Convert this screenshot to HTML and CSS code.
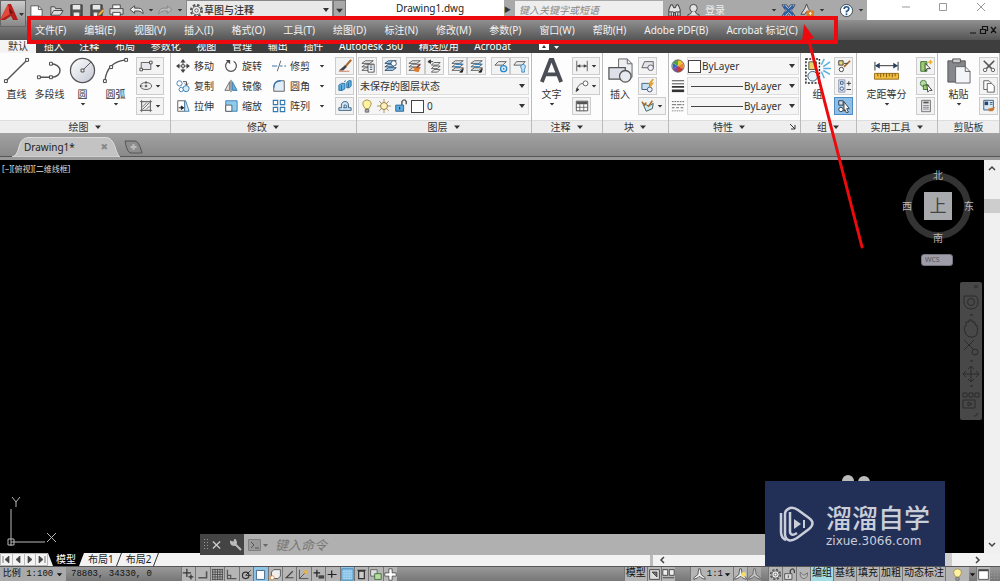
FILE: index.html
```html
<!DOCTYPE html>
<html lang="zh-CN">
<head>
<meta charset="utf-8">
<title>Drawing1.dwg</title>
<link rel="stylesheet" href="styles.css">
</head>
<body>
<svg class="sprite" aria-hidden="true">
  <defs>
    <linearGradient id="disc" x1="0" y1="0" x2="1" y2="1"><stop offset="0" stop-color="#fff"/><stop offset="1" stop-color="#c3c8d4"/></linearGradient>
  </defs>
  <symbol id="dn" viewBox="0 0 8 8"><path d="M1 2.500h6L4 6z" fill="currentColor"/></symbol>
  <symbol id="new" viewBox="0 0 16 16"><path d="M2 3h8l4 4v7H2z" fill="#fff" stroke="#555"/><path d="M10 3v4h4" fill="none" stroke="#555"/></symbol>
  <symbol id="open" viewBox="0 0 16 16"><path d="M2 13V4h4l1 2h6v2M2 13l3-5h10l-3 5z" fill="#ddd" stroke="#444"/></symbol>
  <symbol id="save" viewBox="0 0 16 16"><path d="M2 2h12v12H2z" fill="#555" stroke="#333"/><path d="M4 2h8v5H4zM5 10h6v4H5z" fill="#e8e8e8"/></symbol>
  <symbol id="saveas" viewBox="0 0 16 16"><path d="M2 2h12v12H2z" fill="#555" stroke="#333"/><path d="M4 2h8v5H4zM5 10h4v4H5z" fill="#e8e8e8"/><path d="m9 14 1-3 5-5 2 2-5 5z" fill="#f0b040" stroke="#754"/></symbol>
  <symbol id="print" viewBox="0 0 16 16"><path d="M4 6V2h8v4" fill="#fff" stroke="#444"/><path d="M1 6h14v6H1z" fill="#ddd" stroke="#444"/><path d="M4 10h8v4H4z" fill="#fff" stroke="#444"/></symbol>
  <symbol id="undo" viewBox="0 0 16 16"><path d="m1 7 5-4v2.500h4q5 0 5 6-2-3-5-3H6V11z" fill="#eee" stroke="#444"/></symbol>
  <symbol id="redo" viewBox="0 0 16 16"><path d="m15 7-5-4v2.500H6q-5 0-5 6 2-3 5-3h4V11z" fill="#bbb" stroke="#888"/></symbol>
  <symbol id="gear" viewBox="0 0 16 16"><circle cx="8" cy="8" r="6" fill="none" stroke="#555" stroke-width="2" stroke-dasharray="2.700 2"/><circle cx="8" cy="8" r="4.500" fill="#eee" stroke="#555"/><circle cx="8" cy="8" r="1.800" fill="#fff" stroke="#555"/></symbol>
  <symbol id="binoc" viewBox="0 0 16 16"><path d="M2 7l2-5h2l1 3h2l1-3h2l2 5v7h-5v-4H7v4H2z" fill="#e4e4e4" stroke="#333"/><path d="M2 9.500h5M9 9.500h5M4.500 10v4M11.500 10v4" stroke="#333"/></symbol>
  <symbol id="user" viewBox="0 0 16 16"><circle cx="8" cy="5.500" r="4" fill="#e4e4e4" stroke="#444"/><path d="M6 9q0 3-4 3.500V14h12v-1.500Q10 12 10 9" fill="#e4e4e4" stroke="#444"/></symbol>
  <symbol id="exch" viewBox="0 0 16 16"><path d="M1 2h5l2 3 2-3h5l-4 6 4 6h-5l-2-3-2 3H1l4-6z" fill="#dde" stroke="#346"/><path d="m3 3 10 10M13 3 3 13" stroke="#2c5fa0" stroke-width="2.500"/></symbol>
  <symbol id="tri" viewBox="0 0 16 16"><path d="M7 1 5 6l-4 6h4l2-3 2 3h4L9 6z" fill="#ddd" stroke="#444"/><path d="M7 8h8v7H7z" fill="#e07a1c"/><path d="M9.500 11h3M11 9.500V13" stroke="#fff"/></symbol>
  <symbol id="help" viewBox="0 0 16 16"><circle cx="8" cy="8" r="6.500" fill="#fff" stroke="#345"/><path d="M5.500 6.500Q5.500 4 8 4t2.500 2.200Q10.500 8 8 9v1" fill="none" stroke="#258" stroke-width="1.800"/><circle cx="8" cy="12" r="1" fill="#258"/></symbol>
  <symbol id="line" viewBox="0 0 28 28"><path d="M3 25 25 3" stroke="#555" stroke-width="1.500"/><path d="M1.500 23.500h3v3h-3zM23.500 1.500h3v3h-3z" fill="#fff" stroke="#444"/></symbol>
  <symbol id="pline" viewBox="0 0 28 28"><path d="M3 21h13M15 7c13 0 13 14 1 14" fill="none" stroke="#555" stroke-width="1.500"/><path d="M1.500 19.500h3v3h-3zM14 19.500h3v3h-3zM14 5.500h3v3h-3z" fill="#fff" stroke="#444"/></symbol>
  <symbol id="circle" viewBox="0 0 28 28"><circle cx="14" cy="14" r="12.500" fill="url(#disc)" stroke="#555" stroke-width="1.300"/><path d="m14 14 9-9" stroke="#555"/><path d="M12.500 12.500h3v3h-3z" fill="#fff" stroke="#444"/></symbol>
  <symbol id="arc" viewBox="0 0 28 28"><path d="M3 25Q5 5 25 3" fill="none" stroke="#555" stroke-width="1.500"/><path d="M1.500 23.500h3v3h-3zM23.500 1.500h3v3h-3zM8 9h3v3H8z" fill="#fff" stroke="#444"/></symbol>
  <symbol id="rect" viewBox="0 0 16 16"><path d="M2.500 4h11v8h-11z" fill="#e6e8ee" stroke="#555"/><path d="M1 10.500h3v3H1zM12 2.500h3v3h-3z" fill="#fff" stroke="#444"/></symbol>
  <symbol id="ell" viewBox="0 0 16 16"><ellipse cx="8" cy="8" rx="6.500" ry="4" fill="#eee" stroke="#555"/><path d="M8 2.500v3M1 8h3M6.500 8h3M8 6.500v3" stroke="#333"/></symbol>
  <symbol id="hatch" viewBox="0 0 16 16"><path d="M3 3h10v10H3z" fill="#eee" stroke="#777"/><path d="M1 3h14M1 13h14M3 1v14M13 1v14M4 9l5-5M4 12l8-8M8 12l4-4" stroke="#666"/></symbol>
  <symbol id="move" viewBox="0 0 16 16"><path d="M8 2v12M2 8h12" stroke="#444"/><path d="m8 0 3 4H5zM8 16l-3-4h6zM0 8l4-3v6zM16 8l-4 3V5z" fill="#444"/><path d="M6.500 6.500h3v3h-3z" fill="#fff" stroke="#444"/></symbol>
  <symbol id="rotate" viewBox="0 0 16 16"><path d="M11 2.500A6.200 6.200 0 1 1 5 2.500" fill="none" stroke="#555" stroke-width="1.400"/><path d="M2 1h5v5z" fill="#444"/></symbol>
  <symbol id="trim" viewBox="0 0 16 16"><path d="M0 8h6M9 8h3M14 8h2" stroke="#3679b0" stroke-width="1.400"/><path d="M10 2 6 14" stroke="#555"/></symbol>
  <symbol id="copy" viewBox="0 0 16 16"><circle cx="4" cy="5" r="3" fill="#fff" stroke="#3679b0"/><circle cx="6" cy="12" r="2.500" fill="#fff" stroke="#3679b0"/><circle cx="11.500" cy="11" r="3.500" fill="#d4ebf8" stroke="#3679b0"/><path d="M8 3h4v4M10 5l2 2 2-2" fill="none" stroke="#444"/></symbol>
  <symbol id="mirror" viewBox="0 0 16 16"><path d="M6.500 3v10H1z" fill="#ddd" stroke="#666"/><path d="M9.500 3v10H15z" fill="#5eb0e0" stroke="#3679b0"/><path d="M8 1v14" stroke="#444"/></symbol>
  <symbol id="fillet" viewBox="0 0 16 16"><path d="M2 14V10Q2 2 10 2h4v12z" fill="#e1eef7" stroke="#555"/><path d="M2 10Q2 2 10 2" fill="none" stroke="#3679b0" stroke-width="1.500"/></symbol>
  <symbol id="stretch" viewBox="0 0 16 16"><path d="M2 2h8v12H2z" fill="#fff" stroke="#555"/><path d="M10 2h1l4 12h-5z" fill="#d4ebf8" stroke="#3679b0"/><path d="M3 10h5M6 8l3 2-3 2z" fill="#222" stroke="#222"/></symbol>
  <symbol id="scale" viewBox="0 0 16 16"><path d="M2 2h13v12H2z" fill="#8dcbed" stroke="#3679b0"/><path d="M2 7h7v7H2z" fill="#fff" stroke="#555"/></symbol>
  <symbol id="array" viewBox="0 0 16 16"><path d="M1.500 1.500h5v5h-5zM9.500 1.500h5v5h-5zM1.500 9.500h5v5h-5zM9.500 9.500h5v5h-5z" fill="#fff" stroke="#3679b0" stroke-width="1.300"/></symbol>
  <symbol id="brush" viewBox="0 0 16 16"><path d="m15 1-7 8" stroke="#a8682a" stroke-width="2.500"/><path d="m8 7 2 2-4 4H1z" fill="#444"/><path d="M1 14h12" stroke="#d06a50"/></symbol>
  <symbol id="explode" viewBox="0 0 16 16"><path d="m1 7 3-2h4v6l-3 2H1zM10 4l2-2h3v6l-2 2h-3z" fill="#5eb0e0" stroke="#246a9c"/><path d="M4 7v6M12 4v6M7 3l2-1" stroke="#246a9c"/></symbol>
  <symbol id="offset" viewBox="0 0 16 16"><path d="M1 13h14v-3h-3V8q0-6-5-5-4 1-3 7H1z" fill="#cde6f5" stroke="#357"/><path d="M6 10h4V8Q9 6 7 7v3" fill="none" stroke="#357"/></symbol>
  <symbol id="layer" viewBox="0 0 16 16"><path d="M5 2h9l-4 3H1zM5 6h9l-4 3H1zM5 10h9l-4 3H1z" fill="#eee" stroke="#555"/></symbol>
  <symbol id="lay1" viewBox="0 0 16 16"><use href="#layer"/><path d="M8 6h7v9H8z" fill="#fff" stroke="#444"/><path d="M10 8h3M10 10h3M10 12h3" stroke="#357"/></symbol>
  <symbol id="lay2" viewBox="0 0 16 16"><path d="M5 2h9l-4 3H1zM5 6h9l-4 3H1zM5 10h9l-4 3H1z" fill="#a7d2ed" stroke="#246"/><circle cx="11" cy="5" r="3" fill="#fff" stroke="#357"/></symbol>
  <symbol id="lay3" viewBox="0 0 16 16"><use href="#layer"/><path d="m7 9 7 1-2 5-5-1z" fill="#e07a2c"/><path d="m10 10 4-4" stroke="#844" stroke-width="2"/></symbol>
  <symbol id="lay4" viewBox="0 0 16 16"><path d="M8 4h7l-3 3H5zM8 8h7l-3 3H5zM8 12h7l-3 3H5z" fill="#eee" stroke="#555"/><path d="M7 3H2M4 1 1 3l3 2z" fill="#333" stroke="#333"/></symbol>
  <symbol id="lay5" viewBox="0 0 16 16"><use href="#layer"/><path d="M6 6h7M4 9h6" stroke="#2f86c8" stroke-width="1.500"/><path d="m10 15 4-4-1 4z" fill="#222" stroke="#222"/></symbol>
  <symbol id="lay6" viewBox="0 0 16 16"><path d="M5 3h9l-4 4H1z" fill="#eee" stroke="#555"/><circle cx="11" cy="11" r="3.500" fill="#dff0fb" stroke="#2f86c8" stroke-width="1.500"/><circle cx="11" cy="11" r="1" fill="#2f86c8"/></symbol>
  <symbol id="lay7" viewBox="0 0 16 16"><path d="M4 3h10l-4 4H1z" fill="#eee" stroke="#555"/><path d="M10 12q-3-5 1.500-6Q16 7 13 12v3h-3z" fill="#c5e2f5" stroke="#2f86c8"/></symbol>
  <symbol id="bulb" viewBox="0 0 16 16"><path d="M6 11Q1 5 5 2q3-2 6 0 4 3-1 9z" fill="#fff2a0" stroke="#a08840"/><path d="M6 12h4v3H6z" fill="#aaa" stroke="#666"/></symbol>
  <symbol id="sun" viewBox="0 0 16 16"><path d="M8 0v16M0 8h16M2.500 2.500l11 11M13.500 2.500l-11 11" stroke="#a68b4c"/><circle cx="8" cy="8" r="4" fill="#fff1bb" stroke="#8b7540"/></symbol>
  <symbol id="lock" viewBox="0 0 16 16"><path d="M9 7V3q3-4 5 0v3" fill="none" stroke="#555" stroke-width="1.600"/><path d="M2 7h9v7H2z" fill="#62ade0" stroke="#245f90"/><path d="M6.500 9v3" stroke="#124"/></symbol>
  <symbol id="lockg" viewBox="0 0 16 16"><path d="M9 7V3q3-4 5 0v3" fill="none" stroke="#444" stroke-width="1.600"/><path d="M2 7h9v7H2z" fill="#ddd" stroke="#444"/><path d="M6.500 9v3" stroke="#222"/></symbol>
  <symbol id="text" viewBox="0 0 28 28"><path d="M4 26 13 3h2l9 23M8 18h12" fill="none" stroke="#4a4d55" stroke-width="4"/></symbol>
  <symbol id="dim" viewBox="0 0 16 16"><path d="M2 2v12M14 2v12M3 8h10" stroke="#555"/><path d="m2 8 4-2v4zM14 8l-4-2v4z" fill="#444"/></symbol>
  <symbol id="leader" viewBox="0 0 16 16"><path d="M1 14q3-9 8-9" fill="none" stroke="#555"/><path d="m1 15 1-5 3 2z" fill="#333"/><circle cx="12" cy="5" r="2.800" fill="#fff" stroke="#555"/></symbol>
  <symbol id="table" viewBox="0 0 16 16"><path d="M1.500 2.500h13v11h-13z" fill="#fff" stroke="#444"/><path d="M2 3h12v3H2z" fill="#555"/><path d="M1 9.500h13M5.500 6v8M10 6v8" stroke="#666"/></symbol>
  <symbol id="insert" viewBox="0 0 28 28"><path d="M12 2h9l5 5v14H12z" fill="#eceef2" stroke="#666"/><path d="M21 2v5h5" fill="none" stroke="#666"/><path d="M2 11h17v12H2z" fill="#dde0e8" stroke="#555" stroke-width="1.300"/><circle cx="19" cy="20" r="6" fill="#e6e9ef" stroke="#555" stroke-width="1.300"/></symbol>
  <symbol id="blk" viewBox="0 0 16 16"><path d="M4 3h10v7H1z" fill="#e3e5ea" stroke="#555"/><circle cx="11" cy="10" r="3.200" fill="#eef" stroke="#555"/></symbol>
  <symbol id="blk2" viewBox="0 0 16 16"><path d="M1 5h9v7H1z" fill="#c7e1f3" stroke="#357"/><circle cx="10" cy="12" r="2.800" fill="#eef" stroke="#357"/><path d="m14 0-4 5h3l-3 4" fill="none" stroke="#e2a12c" stroke-width="2"/></symbol>
  <symbol id="blk3" viewBox="0 0 16 16"><path d="m2 5 4 9 7-3 1-6-5 3z" fill="#cfe9ee" stroke="#355"/><path d="m1 3 3 4 2-3M8 9l5-7" fill="none" stroke="#a66a20" stroke-width="1.600"/></symbol>
  <symbol id="wheel" viewBox="0 0 16 16"><path d="M8 8V1a7 7 0 0 1 6 3.500z" fill="#f0c62c"/><path d="m8 8 6-3.500v7z" fill="#e88630"/><path d="m8 8 6 3.500A7 7 0 0 1 8 15z" fill="#c9382f"/><path d="M8 8v7a7 7 0 0 1-6-3.500z" fill="#8444a8"/><path d="m8 8-6 3.500v-7z" fill="#2d6cc0"/><path d="M8 8 2 4.500A7 7 0 0 1 8 1z" fill="#48a848"/><circle cx="8" cy="8" r="7" fill="none" stroke="#555"/></symbol>
  <symbol id="lw" viewBox="0 0 16 16"><path d="M1 2h14M1 5.500h14" stroke="#333"/><path d="M1 9h14" stroke="#333" stroke-width="2"/><path d="M1 13.500h14" stroke="#333" stroke-width="3"/></symbol>
  <symbol id="lt" viewBox="0 0 16 16"><path d="M1 3h14" stroke="#555" stroke-dasharray="2 1"/><path d="M1 6.500h14" stroke="#555" stroke-dasharray="5 1"/><path d="M1 10h14" stroke="#555" stroke-dasharray="3 2"/><path d="M1 13.500h14" stroke="#555" stroke-dasharray="1 1"/></symbol>
  <symbol id="group" viewBox="0 0 28 28"><path d="M2 2h14v25H2z" fill="#fff" stroke="#222" stroke-width="1.500" stroke-dasharray="2 1.500"/><path d="M5 5h8v8H5z" fill="#e8d56a" stroke="#555"/><circle cx="9" cy="20" r="5" fill="#e8f1f8" stroke="#357"/><path d="m18 8 3-6M20 10l7-5M20 12h8M20 14l7 4M18 15l3 7" stroke="#59b0e0" stroke-width="1.500"/></symbol>
  <symbol id="g1" viewBox="0 0 16 16"><path d="M2 2h5v5H2z" fill="#ecd97a" stroke="#333"/><circle cx="5" cy="12" r="2.500" fill="#fff" stroke="#333"/><path d="m8 9 7-7" stroke="#a8682a" stroke-width="2"/><path d="M8 5h4" stroke="#333"/></symbol>
  <symbol id="g2" viewBox="0 0 16 16"><path d="M2 1h7v14H2z" fill="#deedf8" stroke="#88a"/><path d="M4 3h3v3H4z" fill="none" stroke="#357"/><circle cx="5.500" cy="11" r="2" fill="none" stroke="#357"/><path d="M11 5h5M13.500 2.500v5M11 12h5" stroke="#333"/></symbol>
  <symbol id="g3" viewBox="0 0 16 16"><path d="M2 2h5v5H2z" fill="#cde" stroke="#234"/><circle cx="4.500" cy="12" r="2.500" fill="#fff" stroke="#234"/><path d="m8 3 6 8h-3l2 4-2 1-2-4-1 2z" fill="#fff" stroke="#333"/></symbol>
  <symbol id="measure" viewBox="0 0 28 28"><path d="M2 5v9M26 5v9M3 9h22" stroke="#333"/><path d="m2 9 5-3v6zM26 9l-5-3v6z" fill="#27405f"/><path d="M1.500 17h25v6h-25z" fill="#f0bd3c" stroke="#9a6f1c"/><path d="M5 17v3M8 17v4M11 17v3M14 17v4M17 17v3M20 17v4M23 17v3" stroke="#805a14"/></symbol>
  <symbol id="u1" viewBox="0 0 16 16"><path d="M2 3h7v11H2z" fill="#9bd06c" stroke="#363"/><path d="m7 5 6 6H9l-2 3z" fill="#fff" stroke="#333"/><path d="M13 1v5M10.500 3.500h5" stroke="#e6aa20" stroke-width="1.500"/></symbol>
  <symbol id="u2" viewBox="0 0 16 16"><circle cx="5" cy="5" r="3.500" fill="#b9dca0" stroke="#474"/><path d="M5 7h6v5H5z" fill="#9bd06c" stroke="#363"/><path d="m9 6 6 7h-3l-2 2z" fill="#fff" stroke="#333"/></symbol>
  <symbol id="calc" viewBox="0 0 16 16"><path d="M3 1.500h10v13H3z" fill="#e6e6ea" stroke="#666"/><path d="M5 4h6" stroke="#555" stroke-width="2"/><path d="M5 7.500h6M5 9.500h6M5 11.500h6" stroke="#555" stroke-dasharray="1.500 .7"/></symbol>
  <symbol id="paste" viewBox="0 0 28 28"><path d="M3 4h18v22H3z" fill="#85878d" stroke="#555"/><path d="M8 2h8v4H8z" fill="#ccc" stroke="#555"/><path d="M11 10h10l5 5v12H11z" fill="#f4f5f8" stroke="#666"/><path d="M21 10v5h5" fill="none" stroke="#666"/></symbol>
  <symbol id="cut" viewBox="0 0 16 16"><path d="m2 2 9 9M14 2l-9 9" stroke="#555" stroke-width="1.800"/><circle cx="3.500" cy="12.500" r="2" fill="none" stroke="#555"/><circle cx="12.500" cy="12.500" r="2" fill="none" stroke="#555"/></symbol>
  <symbol id="cp" viewBox="0 0 16 16"><path d="M2 2h6l2 2v8H2z" fill="#fff" stroke="#555"/><path d="M6 5h5l3 3v7H6z" fill="#fff" stroke="#555"/></symbol>
  <symbol id="match" viewBox="0 0 16 16"><path d="M2 1.500h11v11H2z" fill="#d8e9f6" stroke="#357"/><path d="M3 3h4v4H3z" fill="#246"/><path d="M9 4h3M9 6h3" stroke="#357"/><path d="m7 11 8-2-3 5H8z" fill="#d0772c"/></symbol>
  <symbol id="snap" viewBox="0 0 16 16"><path d="M6 1v10M1 6h10M11 8v6M8 11h6" stroke="#333" stroke-width="1.500"/></symbol>
  <symbol id="stp" viewBox="0 0 16 16"><path d="M3 12h10V4" fill="none" stroke="#555" stroke-width="2"/></symbol>
  <symbol id="grid" viewBox="0 0 16 16"><path d="M1 2h14M1 5h14M1 8h14M1 11h14M1 14h14M2 1v14M5 1v14M8 1v14M11 1v14M14 1v14" stroke="#444"/></symbol>
  <symbol id="ortho" viewBox="0 0 16 16"><path d="M3 2v11h11M3 9h4v4" fill="none" stroke="#555" stroke-width="1.500"/></symbol>
  <symbol id="polar" viewBox="0 0 16 16"><circle cx="7" cy="9" r="4" fill="none" stroke="#333" stroke-width="1.500"/><path d="m7 9 6-6M7 9h7" stroke="#222"/></symbol>
  <symbol id="osnap" viewBox="0 0 16 16"><path d="M3 3h10v11H3z" fill="#fff" stroke="#357"/></symbol>
  <symbol id="osnap3" viewBox="0 0 16 16"><path d="m3 5 3-3h8v8l-3 3H3z" fill="#eee" stroke="#444"/><circle cx="4" cy="12" r="2.500" fill="#fff" stroke="#d78026"/></symbol>
  <symbol id="angle" viewBox="0 0 16 16"><path d="M12 4 4 12h9" fill="none" stroke="#444" stroke-width="1.500"/></symbol>
  <symbol id="ucs" viewBox="0 0 16 16"><path d="M3 2v11h11M3 13l9-9" fill="none" stroke="#444"/><circle cx="11" cy="5" r="2.500" fill="#e8b348"/></symbol>
  <symbol id="plus" viewBox="0 0 16 16"><path d="M7 3v9M2 8h11" stroke="#222" stroke-width="1.500"/></symbol>
  <symbol id="dynin" viewBox="0 0 16 16"><path d="M6 2v9M2 6h8" stroke="#222" stroke-width="1.500"/><path d="M8 9h7v4H8z" fill="#444"/></symbol>
  <symbol id="tpy" viewBox="0 0 16 16"><path d="M1 1h14v14H1z" fill="#8cc5ea" stroke="#3f7fae"/><path d="M2 4h12M2 7h12M2 10h12M2 13h12" stroke="#c9e5f6" stroke-dasharray="1 1"/></symbol>
  <symbol id="qp" viewBox="0 0 16 16"><path d="M4.500 4h7v9h-7zM3 3h10" fill="#ccc" stroke="#333" stroke-width="1.500"/></symbol>
  <symbol id="sc" viewBox="0 0 16 16"><path d="M2 2h8v8H2z" fill="#ddd" stroke="#555"/><path d="M7 7h8v7H7z" fill="#b9dca0" stroke="#363"/></symbol>
  <symbol id="cross" viewBox="0 0 16 16"><path d="M6 1h4v5h5v4h-5v5H6v-5H1V6h5z" fill="#fff" stroke="#444"/></symbol>
  <symbol id="ann" viewBox="0 0 16 16"><path d="M7 1h2l1 7 5 4v2l-5-2-2-2-2 2-5 2v-2l5-4z" fill="#eee" stroke="#444"/></symbol>
  <symbol id="anny" viewBox="0 0 16 16"><use href="#ann"/><circle cx="12" cy="8" r="3" fill="#f2dc6a"/></symbol>
  <symbol id="mdl" viewBox="0 0 16 16"><path d="M2 2h12v12H2z" fill="#ddd" stroke="#333"/><path d="m5 5 6 6V5z" fill="#777" stroke="#333"/></symbol>
  <symbol id="lay" viewBox="0 0 16 16"><path d="M1 2h6v7H1zM9 2h6v7H9zM1 12h14" fill="#eee" stroke="#333"/></symbol>
  <symbol id="scr" viewBox="0 0 16 16"><path d="M2 2h12v12H2z" fill="#fff" stroke="#444"/><path d="M2 3h12" stroke="#444" stroke-width="2"/></symbol>
  <symbol id="ball" viewBox="0 0 16 16"><path d="M4 5q-1 8 5 8 4-1 4-7l-5 3z" fill="#bbb" stroke="#666"/></symbol>
</svg>

<div class="app">
  <header class="titlebar">
    <div class="quick">
      <button aria-label="新建"><svg><use href="#new"/></svg></button>
      <button aria-label="打开"><svg><use href="#open"/></svg></button>
      <button aria-label="保存"><svg><use href="#save"/></svg></button>
      <button aria-label="另存为"><svg><use href="#saveas"/></svg></button>
      <button aria-label="打印"><svg><use href="#print"/></svg></button>
      <button aria-label="放弃"><svg><use href="#undo"/></svg></button>
      <svg class="dn"><use href="#dn"/></svg>
      <button aria-label="重做"><svg><use href="#redo"/></svg></button>
      <svg class="dn"><use href="#dn"/></svg>
    </div>
    <div class="workspace"><svg class="i14"><use href="#gear"/></svg><select class="arrowed" aria-label="工作空间"><option>草图与注释</option></select></div>
    <button class="quick-more" aria-label="自定义"><svg class="dn"><use href="#dn"/></svg></button>
    <h1>Drawing1.dwg</h1>
    <div class="info">
      <button class="play" aria-label="展开">▶</button>
      <input type="text" placeholder="键入关键字或短语" aria-label="搜索">
      <button aria-label="查找"><svg><use href="#binoc"/></svg></button>
      <button class="login"><svg><use href="#user"/></svg>登录</button>
      <svg class="dn"><use href="#dn"/></svg>
      <button aria-label="交换"><svg><use href="#exch"/></svg></button>
      <button aria-label="应用"><svg><use href="#tri"/></svg></button>
      <svg class="dn"><use href="#dn"/></svg>
      <button class="helpb" aria-label="帮助"><svg><use href="#help"/></svg></button>
      <svg class="dn"><use href="#dn"/></svg>
    </div>
    <div class="window">
      <button aria-label="最小化"><svg viewBox="0 0 10 10"><path d="M1 5h8"/></svg></button>
      <button aria-label="最大化"><svg viewBox="0 0 10 10"><path d="M1.500 1.500h7v7h-7z"/></svg></button>
      <button aria-label="关闭"><svg viewBox="0 0 10 10"><path d="m1 1 8 8M9 1 1 9"/></svg></button>
    </div>
  </header>
  <button class="appbtn" aria-label="应用程序菜单"><svg viewBox="0 0 26 26"><path d="M8 3h3l7 16h-5l-2-4-6 4H0z" fill="#b21f1a"/><path d="M8 3 0 19l10-6z" fill="#e2483c"/><path d="m9 7 1 6 3-1z" fill="#6d0f0d"/><path d="M19 12h5l-2.500 3z" fill="#333"/></svg></button>

  <div class="menurow">
    <nav class="menu">
      <a href="#">文件(F)</a><a href="#">编辑(E)</a><a href="#">视图(V)</a><a href="#">插入(I)</a><a href="#">格式(O)</a><a href="#">工具(T)</a><a href="#">绘图(D)</a><a href="#">标注(N)</a><a href="#">修改(M)</a><a href="#">参数(P)</a><a href="#">窗口(W)</a><a href="#">帮助(H)</a><a href="#">Adobe PDF(B)</a><a href="#">Acrobat 标记(C)</a>
    </nav>
    <svg class="docwin" viewBox="0 0 30 12"><path d="M1 9h6M11.500 5.500h5v4h-5zM13.500 5V2.500h5v4H17M22 3l5 6M27 3l-5 6" fill="none" stroke="#111" stroke-width="1.200"/></svg>
  </div>

  <div class="tabrow">
    <nav class="tabs">
      <a href="#" class="on">默认</a><a href="#">插入</a><a href="#">注释</a><a href="#">布局</a><a href="#">参数化</a><a href="#">视图</a><a href="#">管理</a><a href="#">输出</a><a href="#">插件</a><a href="#">Autodesk 360</a><a href="#">精选应用</a><a href="#">Acrobat</a>
    </nav>
    <svg class="mini" viewBox="0 0 22 8"><path d="M1 1h10v6H1z" fill="#fff"/><path d="m4 5 2-3 2 3z" fill="#333"/><path d="M16 3h5l-2.500 3z" fill="#fff"/></svg>
  </div>

  <main class="ribbon">
    <section class="panel">
      <div class="tools draw">
        <button class="big"><svg><use href="#line"/></svg>直线</button>
        <button class="big"><svg><use href="#pline"/></svg>多段线</button>
        <button class="big"><svg><use href="#circle"/></svg>圆<svg class="dn"><use href="#dn"/></svg></button>
        <button class="big"><svg><use href="#arc"/></svg>圆弧<svg class="dn"><use href="#dn"/></svg></button>
        <div class="stack">
          <button class="split" aria-label="矩形"><svg><use href="#rect"/></svg><svg class="dn"><use href="#dn"/></svg></button>
          <button class="split" aria-label="椭圆"><svg><use href="#ell"/></svg><svg class="dn"><use href="#dn"/></svg></button>
          <button class="split" aria-label="图案填充"><svg><use href="#hatch"/></svg><svg class="dn"><use href="#dn"/></svg></button>
        </div>
      </div>
      <h2>绘图<svg class="dn"><use href="#dn"/></svg></h2>
    </section>
    <section class="panel">
      <div class="tools modify">
        <div class="stack">
          <button class="cmd"><svg><use href="#move"/></svg>移动</button>
          <button class="cmd"><svg><use href="#copy"/></svg>复制</button>
          <button class="cmd"><svg><use href="#stretch"/></svg>拉伸</button>
        </div>
        <div class="stack">
          <button class="cmd"><svg><use href="#rotate"/></svg>旋转</button>
          <button class="cmd"><svg><use href="#mirror"/></svg>镜像</button>
          <button class="cmd"><svg><use href="#scale"/></svg>缩放</button>
        </div>
        <div class="stack">
          <button class="cmd"><svg><use href="#trim"/></svg>修剪<svg class="dn"><use href="#dn"/></svg></button>
          <button class="cmd"><svg><use href="#fillet"/></svg>圆角<svg class="dn"><use href="#dn"/></svg></button>
          <button class="cmd"><svg><use href="#array"/></svg>阵列<svg class="dn"><use href="#dn"/></svg></button>
        </div>
        <div class="stack">
          <button class="sq" aria-label="删除"><svg><use href="#brush"/></svg></button>
          <button class="sq" aria-label="分解"><svg><use href="#explode"/></svg></button>
          <button class="sq" aria-label="偏移"><svg><use href="#offset"/></svg></button>
        </div>
      </div>
      <h2>修改<svg class="dn"><use href="#dn"/></svg></h2>
    </section>
    <section class="panel">
      <div class="tools layers">
        <div class="pairs">
          <div><button class="sq" aria-label="图层特性"><svg><use href="#lay1"/></svg></button></div>
          <div><button class="sq" aria-label="置为当前"><svg><use href="#lay2"/></svg></button></div>
          <div><button class="sq" aria-label="匹配"><svg><use href="#lay3"/></svg></button><button class="sq" aria-label="上一个"><svg><use href="#lay4"/></svg></button></div>
          <div><button class="sq" aria-label="隔离"><svg><use href="#lay5"/></svg></button><button class="sq" aria-label="取消隔离"><svg><use href="#lay5"/></svg></button></div>
          <div><button class="sq" aria-label="冻结"><svg><use href="#lay6"/></svg></button><button class="sq" aria-label="关闭图层"><svg><use href="#lay7"/></svg></button></div>
        </div>
        <div class="field"><select class="arrowed" aria-label="图层状态"><option>未保存的图层状态</option></select></div>
        <div class="field"><svg><use href="#bulb"/></svg><svg><use href="#sun"/></svg><svg><use href="#lock"/></svg><i class="swatch"></i><select class="arrowed" aria-label="图层"><option>0</option></select></div>
      </div>
      <h2>图层<svg class="dn"><use href="#dn"/></svg></h2>
    </section>
    <section class="panel">
      <div class="tools annot">
        <button class="big"><svg><use href="#text"/></svg>文字<svg class="dn"><use href="#dn"/></svg></button>
        <div class="stack">
          <button class="split" aria-label="线性"><svg><use href="#dim"/></svg><svg class="dn"><use href="#dn"/></svg></button>
          <button class="split" aria-label="引线"><svg><use href="#leader"/></svg><svg class="dn"><use href="#dn"/></svg></button>
          <button class="sq" aria-label="表格"><svg><use href="#table"/></svg></button>
        </div>
      </div>
      <h2>注释<svg class="dn"><use href="#dn"/></svg></h2>
    </section>
    <section class="panel">
      <div class="tools block">
        <button class="big"><svg><use href="#insert"/></svg>插入</button>
        <div class="stack">
          <button class="sq" aria-label="创建块"><svg><use href="#blk"/></svg></button>
          <button class="sq" aria-label="编辑块"><svg><use href="#blk2"/></svg></button>
          <button class="split" aria-label="编辑属性"><svg><use href="#blk3"/></svg><svg class="dn"><use href="#dn"/></svg></button>
        </div>
      </div>
      <h2>块<svg class="dn"><use href="#dn"/></svg></h2>
    </section>
    <section class="panel">
      <div class="tools props">
        <div class="prop"><svg><use href="#wheel"/></svg><div class="field"><i class="swatch"></i><select class="arrowed" aria-label="颜色"><option>ByLayer</option></select></div></div>
        <div class="prop"><svg><use href="#lw"/></svg><div class="field"><i class="rule"></i><select class="arrowed" aria-label="线宽"><option>ByLayer</option></select></div></div>
        <div class="prop"><svg><use href="#lt"/></svg><div class="field"><i class="rule"></i><select class="arrowed" aria-label="线型"><option>ByLayer</option></select></div></div>
      </div>
      <h2>特性<svg class="dn"><use href="#dn"/></svg><svg class="launch" viewBox="0 0 8 8"><path d="m1 1 5 5M6 2v4H2" fill="none" stroke="#333"/></svg></h2>
    </section>
    <section class="panel">
      <div class="tools grp">
        <button class="big"><svg><use href="#group"/></svg>组</button>
        <div class="stack">
          <button class="sq" aria-label="解除编组"><svg><use href="#g1"/></svg></button>
          <button class="sq" aria-label="组编辑"><svg><use href="#g2"/></svg></button>
          <button class="sq active" aria-label="组选择"><svg><use href="#g3"/></svg></button>
        </div>
      </div>
      <h2>组<svg class="dn"><use href="#dn"/></svg></h2>
    </section>
    <section class="panel">
      <div class="tools util">
        <button class="big"><svg><use href="#measure"/></svg>定距等分<svg class="dn"><use href="#dn"/></svg></button>
        <div class="stack">
          <button class="sq" aria-label="快速选择"><svg><use href="#u1"/></svg></button>
          <button class="sq" aria-label="全部选择"><svg><use href="#u2"/></svg></button>
          <button class="sq" aria-label="计算器"><svg><use href="#calc"/></svg></button>
        </div>
      </div>
      <h2>实用工具<svg class="dn"><use href="#dn"/></svg></h2>
    </section>
    <section class="panel">
      <div class="tools clip">
        <button class="big"><svg><use href="#paste"/></svg>粘贴<svg class="dn"><use href="#dn"/></svg></button>
        <div class="stack">
          <button class="sq" aria-label="剪切"><svg><use href="#cut"/></svg></button>
          <button class="sq" aria-label="复制"><svg><use href="#cp"/></svg></button>
          <button class="sq" aria-label="特性匹配"><svg><use href="#match"/></svg></button>
        </div>
      </div>
      <h2>剪贴板</h2>
    </section>
  </main>

  <div class="docs">
    <a href="#" class="doc"><svg class="shape" viewBox="0 0 108 20" preserveAspectRatio="none"><path d="M0 20Q5 19 7 10T16 .5H94Q100 .5 103 10T108 20z" fill="#c3c3c3" stroke="#ddd"/></svg><span>Drawing1*</span><b>✖</b></a>
    <button class="add" aria-label="新图形"><svg viewBox="0 0 20 14"><path d="M2 1h10q4 0 7 12H8Q4 13 2 1z" fill="#8d8d8d" stroke="#555"/><path d="M10.500 4v6M7.500 7h6" stroke="#bbb" stroke-width="2"/></svg></button>
  </div>

  <div class="work">
    <div class="canvas">
      <p class="viewlabel">[−][俯视][二维线框]</p>
      <svg class="cube" viewBox="0 0 80 80">
        <circle cx="40" cy="40" r="29.500" fill="none" stroke="#333" stroke-width="7"/>
        <path d="M26 26h28v28H26z" fill="#a9aaae"/>
        <g text-anchor="middle"><text x="40" y="46" class="up">上</text><text x="40" y="13">北</text><text x="9" y="44">西</text><text x="71" y="44">东</text><text x="40" y="76">南</text></g>
      </svg>
      <button class="wcs">WCS</button>
      <svg class="navbar" viewBox="0 0 22 138"><rect width="22" height="138" rx="2" fill="#484848"/><g fill="none" stroke="#2a2a2a"><path d="m14 3 4 3M18 3l-4 3M4 14h10q4 0 4 6t-6 7q-7 0-8-6z"/><circle cx="11" cy="20" r="3.500"/><path d="M5 50q-2-6 1-6v-4h3v-2h3v2h3v3h2q2 12-4 12-6 1-8-5zM4 58l10 10M14 58 4 68M11 100V84M3 92h16M8 87l3-3 3 3M8 97l3 3 3-3M6 89l-3 3 3 3M16 89l3 3-3 3M3 111h4v4H3zM9 111h4v4H9zM15 111h4v4h-4zM3 118h12v8H3zM8 120l4 2-4 2zM14 134q4 0 3-3"/><circle cx="15" cy="70" r="3"/></g><path d="M10 33h3M10 79h3M10 104h3" stroke="#222"/></svg>
      <svg class="ucsicon" viewBox="0 0 56 52"><path d="M8 15v37M8 48h34M5 45h6v6H5zM9 3l4 5 4-5M13 8v5M44 39l9 9M53 39l-9 9" fill="none" stroke="#b8b8b8"/></svg>
      <svg class="dots" viewBox="0 0 30 8"><circle cx="8" cy="7" r="6" fill="#bbb"/><circle cx="24" cy="8" r="6" fill="#bbb"/></svg>
      <form class="command">
        <div class="handle"><i class="grip"></i><svg viewBox="0 0 10 10"><path d="m1 1 8 8M9 1 1 9" stroke="#ccc" stroke-width="1.500"/></svg><svg viewBox="0 0 12 12"><path d="m5 5 6 6M1 3q0 3 4 3 2-2 0-5L4 4z" stroke="#bbb" stroke-width="2" fill="none"/></svg></div>
        <svg class="prompt" viewBox="0 0 20 12"><path d="M.5.500h12v11H.500z" fill="#999" stroke="#808080"/><path d="m3 3 3 3-3 3M7 9h4" fill="none" stroke="#555"/><path d="M15 5h5l-2.500 3z" fill="#666"/></svg>
        <input type="text" placeholder="键入命令" aria-label="命令行">
      </form>
    </div>
    <div class="vscroll"><svg viewBox="0 0 8 8"><path d="m1 6 3-3 3 3"/></svg><i></i><svg viewBox="0 0 8 8"><path d="m1 2 3 3 3-3"/></svg></div>
  </div>

  <div class="layouts">
    <svg class="seek" viewBox="0 0 48 13"><path d="M.5.500h12v12H.500zM12.500.500h12v12h-12zM24.500.500h11v12h-11zM35.500.500h12v12h-12z" fill="#f4f4f4" stroke="#bbb"/><path d="M3 3v7M9 3v7L5 6.500zM20 3v7l-4-3.500zM28 3v7l4-3.500zM39 3v7l4-3.500zM45 3v7" fill="#444" stroke="#444" stroke-width=".7"/></svg>
    <a href="#" class="on">模型</a>
    <a href="#">布局1</a>
    <svg class="slant" viewBox="0 0 6 13"><path d="M5.500 0 .5 13" stroke="#333"/></svg>
    <a href="#">布局2</a>
    <svg class="slant" viewBox="0 0 6 13"><path d="M5.500 0 .5 13" stroke="#333"/></svg>
    <div class="hscroll"><svg viewBox="0 0 8 8"><path d="M5 1 2 4l3 3"/></svg><i></i><svg viewBox="0 0 8 8"><path d="m3 1 3 3-3 3"/></svg></div>
  </div>

  <footer class="status">
    <button class="scale">比例 1:100<svg class="dn"><use href="#dn"/></svg></button>
    <output class="coords">78803, 34330, 0</output>
    <div class="toggles">
      <button aria-label="推断"><svg><use href="#snap"/></svg></button><button aria-label="捕捉"><svg><use href="#stp"/></svg></button><button aria-label="栅格"><svg><use href="#grid"/></svg></button><button aria-label="正交"><svg><use href="#ortho"/></svg></button><button aria-label="极轴"><svg><use href="#polar"/></svg></button><button class="lit" aria-label="对象捕捉"><svg><use href="#osnap"/></svg></button><button aria-label="三维捕捉"><svg><use href="#osnap3"/></svg></button><button aria-label="追踪"><svg><use href="#angle"/></svg></button><button aria-label="动态UCS"><svg><use href="#ucs"/></svg></button><button aria-label="动态输入"><svg><use href="#dynin"/></svg></button><button aria-label="线宽显示"><svg><use href="#plus"/></svg></button><button class="lit" aria-label="透明度"><svg><use href="#tpy"/></svg></button><button aria-label="快捷特性"><svg><use href="#qp"/></svg></button><button aria-label="选择循环"><svg><use href="#sc"/></svg></button><button aria-label="注释监视器"><svg><use href="#cross"/></svg></button>
    </div>
    <div class="right">
      <button class="txt">模型</button>
      <button aria-label="模型空间"><svg><use href="#mdl"/></svg></button><button aria-label="快速查看"><svg><use href="#lay"/></svg></button>
      <button class="anno"><svg><use href="#ann"/></svg>1:1<svg class="dn"><use href="#dn"/></svg></button>
      <button aria-label="注释可见性"><svg><use href="#anny"/></svg></button><button class="dim" aria-label="自动缩放"><svg><use href="#ann"/></svg></button>
      <button class="spaced" aria-label="工作空间"><svg><use href="#gear"/></svg></button><button aria-label="锁定"><svg><use href="#lockg"/></svg></button><button aria-label="硬件加速"><svg><use href="#ball"/></svg></button>
      <button class="txt cyan">编组</button><button class="txt">基线</button><button class="txt">填充</button><button class="txt">加粗</button><button class="txt">动态标注</button>
      <button class="wide" aria-label="隔离对象"><svg><use href="#bulb"/></svg></button><svg class="dn"><use href="#dn"/></svg><button aria-label="全屏"><svg><use href="#scr"/></svg></button>
      <i class="grip"></i>
    </div>
  </footer>

  <aside class="brand">
    <svg viewBox="0 0 36 36"><path d="M11 2q4-1 8 2l11 8q7 5 0 11l-12 9q-10 6-12-3V8q0-4 5-6z" fill="none" stroke="#c9ced9" stroke-width="2.500"/><path d="M11 6v20q1 5 7 1" fill="none" stroke="#c9ced9" stroke-width="2.500"/><path d="M2 7v19q0 6 5 8" fill="none" stroke="#c9ced9" stroke-width="2.500"/><path d="m15 13 7 5-7 5z" fill="#c9ced9"/><path d="M25 14v8" stroke="#c9ced9" stroke-width="2"/></svg>
    <div><strong>溜溜自学</strong><small>zixue.3066.com</small></div>
  </aside>
  <div class="callout"></div>
  <svg class="pointer" viewBox="0 0 64 226"><path d="m8 13 54 210" stroke="#ec0a0e" stroke-width="3" stroke-linecap="round"/><path d="m4 0-2 18 12-4z" fill="#ec0a0e"/></svg>
</div>
</body>
</html>
```
FILE: styles.css
```css
* { box-sizing: border-box; }
body { margin: 0; font: 10px/14px "Noto Sans", "Noto Sans CJK SC", sans-serif; color: #333; background: #000; }
button, input, select { font: inherit; color: inherit; border: 0; padding: 0; margin: 0; background: none; min-width: 0; outline: 0; white-space: nowrap; }
a { color: inherit; text-decoration: none; white-space: nowrap; }
h1, h2, p { margin: 0; font-weight: 400; }
svg { display: block; width: 14px; height: 14px; flex: none; }
.sprite { position: absolute; width: 0; height: 0; }
svg.dn { width: 6px; height: 6px; }
button { display: flex; align-items: center; justify-content: center; flex: none; }
.arrowed { appearance: none; background: url("data:image/svg+xml,%3Csvg xmlns='http://www.w3.org/2000/svg' width='8' height='8'%3E%3Cpath d='M1 2h6L4 6z' fill='%23333'/%3E%3C/svg%3E") no-repeat right 2px center; }
.app { position: relative; display: flex; flex-direction: column; min-height: 100vh; overflow: hidden; }

.titlebar { display: flex; height: 20px; background: #fff; }
.titlebar svg { width: 15px; height: 15px; }
.titlebar svg.dn { width: 6px; height: 6px; }
.quick { display: flex; align-items: center; gap: 5px; padding-left: 29px; width: 186px; background: #a9a9a9; }
.quick svg.dn { margin: 0 -1px; }
.workspace { display: flex; align-items: center; width: 147px; padding-left: 2px; background: #e9e9e9; border: 1px solid #888; }
.workspace select { flex: 1; font-weight: 500; }
.quick-more { width: 13px; background: #a9a9a9; border: 1px solid #777; }
.quick-more svg.dn { width: 9px; height: 9px; }
.titlebar h1 { flex: 1; padding-left: 10px; font-size: 10px; line-height: 17px; color: #222; text-align: center; }
.info { display: flex; align-items: center; gap: 4px; width: 363px; padding-right: 3px; background: #a9a9a9; }
.info input { width: 148px; height: 18px; padding-left: 4px; background: #eee; font-style: italic; }
.info input::placeholder { color: #888; }
.info .play { width: 7px; font-size: 7px; }
.info .login { gap: 4px; color: #eee; }
.info .login + .dn { margin-left: auto; }
.info .helpb { margin-left: 10px; }
.window { display: flex; align-items: flex-start; justify-content: space-around; width: 133px; padding: 2px 0 0 20px; }
.window svg { width: 10px; height: 10px; fill: none; stroke: #999; }
.appbtn { position: absolute; left: 0; top: 0; width: 26px; height: 27px; background: linear-gradient(#ccc, #888); border: 1px solid #666; z-index: 1; }
.appbtn svg { width: 26px; height: 26px; }

.menurow { display: flex; align-items: center; justify-content: space-between; height: 20px; padding: 0 1px 0 35px; background: linear-gradient(#909090, #555); }
.menu { display: flex; justify-content: space-between; width: 80%; max-width: 763px; color: #f2f2f2; }
.docwin { width: 30px; height: 12px; }
.tabrow { display: flex; align-items: center; height: 13px; background: #3e3e3e; color: #fff; gap: 27px; }
.tabs { display: flex; justify-content: space-between; width: 52%; max-width: 511px; }
.tabs a { line-height: 13px; }
.tabs .on { background: #f4f4f4; color: #333; padding: 0 8px; margin-right: -8px; }
.mini { width: 22px; height: 8px; }

.ribbon { display: grid; grid-template-columns: 171fr 186fr 175fr 71fr 66fr 132fr 56fr 81fr 62fr; height: 80px; background: #fdfdfd; }
.panel { display: flex; flex-direction: column; min-width: 0; border-right: 1px solid #bbb; }
.panel h2 { display: flex; align-items: center; justify-content: center; gap: 5px; height: 13px; background: #eee; border-top: 1px solid #ddd; font-size: 10px; line-height: 12px; }
.panel h2 svg.dn { width: 8px; height: 8px; }
.panel h2 .launch { width: 8px; height: 8px; margin: 0 3px 0 auto; }
.panel h2:has(.launch) { padding-left: 44px; }
.tools { display: flex; height: 67px; padding-top: 4px; }
.big { display: flex; flex-direction: column; align-items: center; justify-content: flex-start; line-height: 14px; }
.big svg { width: 27px; height: 27px; margin-bottom: 3px; }
.stack { display: flex; flex-direction: column; gap: 2px; }
.sq, .split { height: 18px; width: 19px; border: 1px solid #ccc; background: #f3f3f3; }
.split { width: 28px; justify-content: space-between; padding: 0 2px; }
.sq.active { background: #8dbfea; border-color: #4d8dc4; }
.cmd { height: 18px; gap: 4px; justify-content: flex-start; }
.cmd svg.dn { margin-left: 5px; }
.draw .big { width: 33px; }
.draw .stack { margin-left: 4px; }
.modify { gap: 10px; padding-left: 5px; }
.layers { flex-direction: column; gap: 2px; padding: 4px 2px 0 1px; }
.pairs { display: flex; justify-content: space-between; }
.pairs div { display: flex; }
.field { display: flex; align-items: center; flex: 1; height: 18px; max-height: 18px; min-width: 0; border: 1px solid #ddd; background: #f5f5f5; }
.layers .field { flex: none; gap: 3px; padding-left: 1px; }
.field select { flex: 1; height: 16px; }
.swatch { width: 13px; height: 13px; border: 1px solid #444; background: #fff; flex: none; }
.rule { width: 52px; margin-left: 3px; border-top: 1px solid #444; flex: none; }
.annot { padding-left: 4px; gap: 5px; }
.annot .big { width: 31px; }
.block { padding-left: 3px; gap: 4px; }
.block .big { width: 28px; }
.props { flex-direction: column; gap: 2px; padding: 4px 1px 0 2px; }
.props .field { gap: 1px; }
.prop { display: flex; align-items: center; gap: 2px; height: 18px; }
.grp { padding-left: 3px; gap: 3px; }
.grp .big { width: 27px; }
.util { padding-left: 4px; gap: 4px; }
.util .big { width: 51px; }
.clip { padding-left: 5px; gap: 5px; }
.clip .big { width: 31px; }
.big svg.dn { width: 6px; height: 6px; margin: 0; }

.docs { display: flex; align-items: flex-end; gap: 3px; height: 27px; padding: 0 12px 3px; background: linear-gradient(#a2a2a2, #858585); box-shadow: inset 0 -3px #999, inset 0 -4px #555; }
.doc { position: relative; display: flex; align-items: center; justify-content: space-between; width: 108px; height: 20px; padding: 0 12px; color: #222; }
.doc .shape { position: absolute; inset: 0; width: 100%; height: 100%; }
.doc span, .doc b { position: relative; }
.doc b { font: 9px/14px "DejaVu Sans", sans-serif; color: #888; }
.add svg { width: 20px; height: 14px; }
.add { padding-bottom: 3px; }

.work { display: flex; flex: 1; min-height: 240px; }
.canvas { position: relative; flex: 1; background: #000; }
.viewlabel { padding: 3px 2px; font-size: 8px; line-height: 12px; color: #ddd; }
.cube { position: absolute; right: 6px; top: 6px; width: 80px; height: 80px; fill: #bbb; font-size: 10px; }
.cube .up { font-size: 17px; fill: #444; }
.wcs { position: absolute; right: 31px; top: 94px; width: 32px; height: 12px; justify-content: flex-start; padding-left: 3px; border: 1px solid #77737f; border-radius: 3px; background: #9f9ca9; color: #555; font-size: 7px; line-height: 8px; }
.navbar { position: absolute; right: 2px; top: 122px; width: 22px; height: 138px; }
.ucsicon { position: absolute; left: 3px; bottom: 7px; width: 56px; height: 52px; }
.dots { position: absolute; right: 114px; bottom: 71px; width: 30px; height: 8px; }
.command { position: absolute; left: 200px; right: 200px; bottom: -2px; display: flex; align-items: center; height: 21px; background: #b0b0b0; z-index: 1; }
.handle { display: flex; align-items: center; gap: 9px; width: 44px; height: 21px; padding-left: 3px; background: #444; }
.handle svg { width: 9px; height: 10px; fill: none; }
.handle svg:last-child { width: 12px; height: 12px; }
.handle .grip { width: 5px; height: 13px; margin-right: -5px; }
.grip { background: radial-gradient(#999 1px, transparent 1px) 0 0 / 3px 3px; }
.prompt { width: 20px; height: 12px; margin: 0 7px 0 4px; }
.command input { flex: 1; font-size: 13px; font-style: italic; }
.command input::placeholder { color: #777; }
.vscroll { display: flex; flex-direction: column; align-items: center; width: 16px; padding: 4px 0; background: #f0f0f0; }
.vscroll svg, .hscroll svg { width: 8px; height: 8px; fill: none; stroke: #444; stroke-width: 1.5px; }
.vscroll i { width: 16px; height: 14px; margin: 27px 0 auto; background: #cdcdcd; }

.layouts { display: flex; height: 13px; background: #f2f2f2; color: #222; line-height: 13px; }
.seek { width: 48px; height: 13px; }
.layouts a { padding: 0 2px 0 4px; }
.layouts a.on { padding: 0 8px; background: #000; color: #fff; clip-path: polygon(0 0, 100% 0, calc(100% - 5px) 100%, 5px 100%); }
.slant { width: 6px; height: 13px; }
.hscroll { display: flex; align-items: center; width: 35%; margin-left: auto; padding: 0 19px 0 6px; border-left: 3px solid #bbb; }
.hscroll i { width: 14px; height: 13px; margin: 0 21px 0 auto; background: #cdcdcd; }

.status { display: flex; align-items: center; height: 15px; background: linear-gradient(#999, #777); border-top: 1px solid #555; font-family: "Liberation Mono", "Noto Sans CJK SC", monospace; font-size: 9px; color: #111; }
.status svg { width: 13px; height: 13px; }
.status svg.dn { width: 7px; height: 7px; }
.scale { width: 66px; gap: 3px; background: #aaa; height: 14px; }
.coords { width: 115px; padding-left: 5px; }
.toggles, .right { display: flex; height: 14px; }
.toggles button, .right button { height: 14px; min-width: 14px; border-left: 1px solid #777; background: #b5b5b5; }
.toggles button { width: 14px; }
.toggles { background: #b5b5b5; width: 216px; justify-content: space-between; }
.toggles .lit { background: #8dc6e6; }
.right { align-items: center; margin-left: auto; }
.right .txt { font-size: 10px; padding: 0 1px; }
.right .cyan { background: #a5dde6; }
.right .anno { margin-left: 15px; gap: 1px; padding: 0 2px; }
.right .dim { opacity: .6; }
.right .spaced { margin-left: 7px; }
.right .wide { width: 24px; }
.right .grip { width: 10px; height: 12px; }

.brand { position: absolute; right: 55px; bottom: 15px; z-index: 2; display: flex; align-items: center; gap: 11px; width: 180px; height: 85px; padding-left: 14px; background: #223058; color: #c9ced9; }
.brand svg { width: 36px; height: 36px; }
.brand strong { display: block; font: 500 26px/34px "Noto Sans CJK SC", sans-serif; }
.brand small { display: block; font: 12px/14px "DejaVu Sans", sans-serif; }
.callout { position: absolute; left: 27px; top: 16px; width: 811px; height: 28px; border: 4px solid #ec0a0e; z-index: 3; pointer-events: none; }
.pointer { position: absolute; left: 800px; top: 24px; width: 64px; height: 226px; fill: none; z-index: 4; pointer-events: none; }
```
